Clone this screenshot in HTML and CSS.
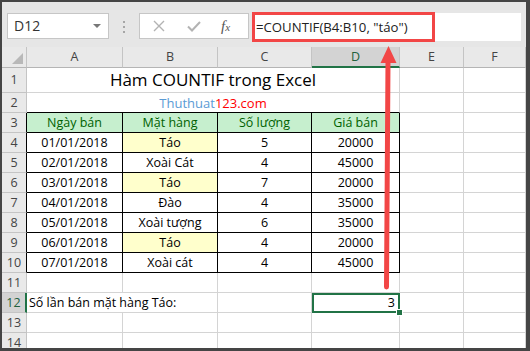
FILE: index.html
```html
<!DOCTYPE html>
<html lang="vi">
<head>
  <meta charset="UTF-8">
  <title>Hàm COUNTIF trong Excel</title>
  <link rel="stylesheet" href="styles.css">
</head>
<body>
  <div class="window">
    <div class="formula-bar">
      <div class="name-box">D12<span class="caret"></span></div>
      <svg class="grip" width="4" height="12" viewBox="0 0 4 12">
        <rect x="1" y="0" width="2" height="2" fill="#a6a6a6"/>
        <rect x="1" y="5" width="2" height="2" fill="#a6a6a6"/>
        <rect x="1" y="10" width="2" height="2" fill="#a6a6a6"/>
      </svg>
      <div class="fx-buttons">
        <svg width="12" height="12" viewBox="0 0 12 12"><path d="M1 1 L11 11 M11 1 L1 11" stroke="#b3b3b3" stroke-width="1.4" fill="none"/></svg>
        <svg width="14" height="11" viewBox="0 0 14 11"><path d="M1 5.5 L5 9.5 L13 1" stroke="#b3b3b3" stroke-width="2" fill="none"/></svg>
        <span class="fx">f<span class="x">x</span></span>
      </div>
      <div class="formula-input">=COUNTIF(B4:B10, "táo")</div>
    </div>

    <table class="sheet">
      <colgroup>
        <col class="c-head"><col class="c-a"><col class="c-b"><col class="c-c"><col class="c-d"><col class="c-e"><col class="c-f">
      </colgroup>
      <tr class="r-head">
        <th class="corner"><span class="tri"></span></th>
        <th>A</th><th>B</th><th>C</th><th class="sel-col">D</th><th>E</th><th>F</th>
      </tr>
      <tr class="r-title">
        <th>1</th>
        <td colspan="4" class="title">Hàm COUNTIF trong Excel</td>
        <td></td><td></td>
      </tr>
      <tr>
        <th>2</th>
        <td colspan="4" class="site box-top"><span class="blue">Thuthuat</span><span class="red">123.com</span></td>
        <td></td><td></td>
      </tr>
      <tr>
        <th class="box-left">3</th>
        <td class="hdr box">Ngày bán</td><td class="hdr box">Mặt hàng</td><td class="hdr box">Số lượng</td><td class="hdr box">Giá bán</td>
        <td></td><td></td>
      </tr>
      <tr>
        <th class="box-left">4</th>
        <td class="box">01/01/2018</td><td class="box apple">Táo</td><td class="box">5</td><td class="box">20000</td>
        <td></td><td></td>
      </tr>
      <tr>
        <th class="box-left">5</th>
        <td class="box">02/01/2018</td><td class="box">Xoài Cát</td><td class="box">4</td><td class="box">45000</td>
        <td></td><td></td>
      </tr>
      <tr>
        <th class="box-left">6</th>
        <td class="box">03/01/2018</td><td class="box apple">Táo</td><td class="box">7</td><td class="box">20000</td>
        <td></td><td></td>
      </tr>
      <tr>
        <th class="box-left">7</th>
        <td class="box">04/01/2018</td><td class="box">Đào</td><td class="box">4</td><td class="box">35000</td>
        <td></td><td></td>
      </tr>
      <tr>
        <th class="box-left">8</th>
        <td class="box">05/01/2018</td><td class="box">Xoài tượng</td><td class="box">6</td><td class="box">35000</td>
        <td></td><td></td>
      </tr>
      <tr>
        <th class="box-left">9</th>
        <td class="box">06/01/2018</td><td class="box apple">Táo</td><td class="box">4</td><td class="box">20000</td>
        <td></td><td></td>
      </tr>
      <tr>
        <th class="box-left">10</th>
        <td class="box">07/01/2018</td><td class="box">Xoài cát</td><td class="box">4</td><td class="box">45000</td>
        <td></td><td></td>
      </tr>
      <tr>
        <th>11</th>
        <td></td><td></td><td></td><td></td><td></td><td></td>
      </tr>
      <tr>
        <th class="sel-row">12</th>
        <td colspan="2" class="label">Số lần bán mặt hàng Táo:</td><td></td>
        <td class="active">3</td>
        <td></td><td></td>
      </tr>
      <tr>
        <th>13</th>
        <td></td><td></td><td></td><td></td><td></td><td></td>
      </tr>
      <tr>
        <th>14</th>
        <td></td><td></td><td></td><td></td><td></td><td></td>
      </tr>
    </table>
  </div>

  <!-- chú thích: khung đỏ quanh công thức và mũi tên chỉ xuống ô D12 -->
  <svg class="annotation" width="530" height="351" viewBox="0 0 530 351">
    <rect x="253.5" y="13.5" width="180" height="27" fill="none" stroke="#f24646" stroke-width="3"/>
    <line x1="386.5" y1="287" x2="388" y2="60" stroke="#f24646" stroke-width="5" stroke-linecap="round"/>
    <polygon points="388.5,46 380.5,63 396.5,63" fill="#f24646"/>
  </svg>
</body>
</html>
```

FILE: styles.css
```css
body {
  margin: 0;
  background: #454545;
  position: relative;
  width: 530px;
  height: 351px;
  overflow: hidden;
}
.window {
  position: absolute;
  left: 2px;
  top: 2px;
  width: 524px;
  height: 346px;
  overflow: hidden;
  background: #fff;
}

/* thanh công thức */
.formula-bar {
  height: 45px;
  background: #e6e6e6;
  display: flex;
  align-items: flex-start;
  padding: 11px 0 0 5px;
  box-sizing: border-box;
  font-family: "Open Sans", sans-serif;
}
.name-box {
  width: 102px;
  height: 26px;
  box-sizing: border-box;
  background: #fff;
  border: 1px solid #c6c6c6;
  padding-left: 6px;
  font-size: 14px;
  line-height: 24px;
  color: #333;
  position: relative;
}
.caret {
  position: absolute;
  right: 7px;
  top: 10px;
  border-left: 4px solid transparent;
  border-right: 4px solid transparent;
  border-top: 4px solid #777;
}
.grip {
  margin: 8px 0 0 13px;
}
.fx-buttons {
  margin-left: 13px;
  width: 110px;
  height: 26px;
  box-sizing: border-box;
  background: #fff;
  border: 1px solid #c6c6c6;
  display: flex;
  align-items: center;
  padding-left: 13px;
  gap: 22px;
}
.fx {
  font-family: "Liberation Serif", serif;
  font-style: italic;
  font-size: 15px;
  color: #555;
  margin-left: -2px;
}
.fx .x {
  font-size: 11px;
}
.formula-input {
  margin-left: 4px;
  width: 268px;
  height: 28px;
  background: #fff;
  font-size: 13.2px;
  line-height: 28px;
  padding-left: 3px;
  box-sizing: border-box;
  color: #222;
  white-space: nowrap;
}

/* bảng tính */
.sheet {
  border-collapse: separate;
  border-spacing: 0;
  table-layout: fixed;
  width: 524px;
  font-family: "Open Sans", sans-serif;
  font-size: 12.5px;
  color: #000;
}
.c-head { width: 25px; }
.c-a { width: 96px; }
.c-b { width: 95px; }
.c-c { width: 94px; }
.c-d { width: 88px; }
.c-e { width: 64px; }
.c-f { width: 62px; }

.sheet td,
.sheet th {
  box-sizing: border-box;
  height: 20px;
  padding: 0;
  border-right: 1px solid #d4d4d4;
  border-bottom: 1px solid #d4d4d4;
  text-align: center;
  white-space: nowrap;
  overflow: visible;
  line-height: 18px;
}
.sheet th {
  background: #e9e9e9;
  color: #444;
  font-weight: normal;
  font-size: 12.5px;
  border-right-color: #c4c4c4;
  border-bottom-color: #c4c4c4;
}
.r-head th {
  height: 21px;
  border-bottom-color: #b5b5b5;
}
.corner {
  position: relative;
}
.tri {
  position: absolute;
  right: 3px;
  bottom: 3px;
  border-left: 11px solid transparent;
  border-bottom: 11px solid #b8b8b8;
}
.sel-col {
  background: #d3d3d3 !important;
  color: #22613d !important;
  border-bottom: 2px solid #217346 !important;
}
.sel-row {
  background: #d3d3d3 !important;
  color: #22613d !important;
  border-right: 2px solid #217346 !important;
}
.r-title td,
.r-title th {
  height: 25px;
}
.title {
  font-size: 17px;
  line-height: 24px;
}
.site {
  font-size: 13px;
}
.blue { color: #5b9bd5; }
.red { color: #ff0000; }

.box-top { border-bottom-color: #000 !important; }
.box-left { border-right-color: #000 !important; }
.sheet td.box {
  border-right-color: #000;
  border-bottom-color: #000;
}
.hdr {
  background: #c6efce;
  color: #006100;
}
.apple {
  background: #ffffcc;
}
.sheet td.label {
  text-align: left;
  padding-left: 2px;
}
.sheet td.active {
  position: relative;
  text-align: right;
  padding-right: 4px;
  outline: 2px solid #217346;
  outline-offset: -2px;
}
.active::after {
  content: "";
  position: absolute;
  right: -4px;
  bottom: -4px;
  width: 5px;
  height: 5px;
  background: #217346;
  border: 1px solid #fff;
}

.annotation {
  position: absolute;
  left: 0;
  top: 0;
}
```
